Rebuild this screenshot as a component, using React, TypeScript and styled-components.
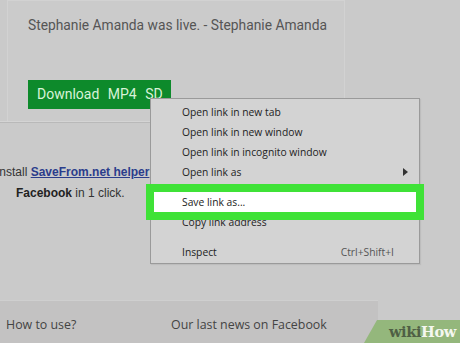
import { createGlobalStyle } from "styled-components";
import styled from "styled-components";

const Global = createGlobalStyle`
  html, body {
    margin: 0;
    padding: 0;
    background: #cacaca;
  }
  #root {
    width: 460px;
    height: 343px;
    overflow: hidden;
  }
`;

const Page = styled.div`
  position: relative;
  width: 460px;
  height: 343px;
  display: flex;
  flex-direction: column;
  background: #cacaca;
`;

const Card = styled.div`
  margin-left: 7px;
  width: 338px;
  height: 122px;
  box-sizing: border-box;
  border-left: 1px solid #d2d2d2;
  border-right: 1px solid #d2d2d2;
  border-top: 1px solid #d2d2d2;
  background: #cbcbcb;
  padding: 14px 0 0 20px;
  display: flex;
  flex-direction: column;
`;

const Title = styled.div`
  font-family: Roboto, "Noto Sans", sans-serif;
  font-size: 13.8px;
  color: #555;
  line-height: 20px;
`;

const DownloadButton = styled.div`
  margin-top: 45px;
  align-self: flex-start;
  height: 29px;
  width: 143px;
  box-sizing: border-box;
  padding-left: 9px;
  background: #0d8a2b;
  color: #d8f2d8;
  font-family: Roboto, "Noto Sans", sans-serif;
  font-size: 14px;
  word-spacing: 5px;
  line-height: 29px;
`;

const Helper = styled.div`
  width: 345px;
  border-top: 1px solid #b9b9b9;
  box-shadow: 0 -1px 0 #d4d4d4;
  padding-top: 39px;
  height: 178px;
  box-sizing: border-box;
  font-family: "Liberation Sans", Arial, sans-serif;
  font-size: 12px;
  color: #333;
  overflow: hidden;
`;

const HelperLine = styled.div<{ indent: number }>`
  margin-left: ${({ indent }) => indent}px;
  line-height: 21px;
  white-space: nowrap;
`;

const HelperLink = styled.span`
  color: #2b3d8c;
  text-decoration: underline;
  font-weight: bold;
`;

const Strong = styled.b`
  color: #222;
`;

const Footer = styled.div`
  width: 378px;
  flex: 1;
  background: #c3c2c2;
  border-top: 1px solid #cfcfcf;
  display: flex;
  align-items: center;
  font-family: "Open Sans", "Noto Sans", sans-serif;
  font-size: 12.4px;
  color: #444;
  padding-top: 4px;
  box-sizing: border-box;
`;

const FooterLink = styled.span<{ width: number }>`
  width: ${({ width }) => width}px;
  padding-left: 6px;
  box-sizing: border-box;
`;

const Menu = styled.div`
  position: absolute;
  left: 150px;
  top: 98px;
  width: 270px;
  height: 166px;
  box-sizing: border-box;
  background: #d3d3d3;
  border: 1px solid #9a9a9a;
  box-shadow: 1px 1px 1px #bdbdbd;
  padding-top: 3px;
  font-family: "Open Sans", "Noto Sans", sans-serif;
  font-size: 10.3px;
  color: #222;
`;

const Item = styled.div<{ active?: boolean }>`
  position: relative;
  height: 20px;
  line-height: 20px;
  padding-left: 28px;
  padding-right: 22px;
  margin: 0 3px;
  display: flex;
  justify-content: space-between;
  background: ${({ active }) => (active ? "#ffffff" : "transparent")};
  outline: ${({ active }) => (active ? "8px solid #3fe237" : "none")};
  z-index: ${({ active }) => (active ? 1 : 0)};
`;

const Gap = styled.div<{ h: number }>`
  height: ${({ h }) => h}px;
`;

const Shortcut = styled.span`
  color: #555;
`;

const Arrow = styled.span`
  width: 0;
  height: 0;
  margin-top: 6px;
  margin-right: -14px;
  border-left: 5px solid #333;
  border-top: 4px solid transparent;
  border-bottom: 4px solid transparent;
`;

const Logo = styled.div`
  position: absolute;
  right: 0;
  bottom: 0;
  width: 96px;
  height: 23px;
  background: #94b77c;
  clip-path: polygon(13px 0, 100% 0, 100% 100%, 0 100%);
  display: flex;
  align-items: center;
  justify-content: flex-end;
  padding-right: 4px;
  box-sizing: border-box;
  font-family: "DejaVu Serif", "Liberation Serif", serif;
  font-weight: bold;
  font-size: 14.6px;
  letter-spacing: -0.4px;
`;

const Wiki = styled.span`
  color: #4f5f45;
`;

const How = styled.span`
  color: #f4f7f0;
`;

export default function App() {
  return (
    <Page>
      <Global />
      <Card>
        <Title>Stephanie Amanda was live. - Stephanie Amanda</Title>
        <DownloadButton>Download MP4 SD</DownloadButton>
      </Card>
      <Helper>
        <HelperLine indent={-4}>
          Install <HelperLink>SaveFrom.net helper</HelperLink> or
        </HelperLine>
        <HelperLine indent={16}>
          <Strong>Facebook</Strong> in 1 click.
        </HelperLine>
      </Helper>
      <Footer>
        <FooterLink width={165}>How to use?</FooterLink>
        <FooterLink width={200}>Our last news on Facebook</FooterLink>
      </Footer>

      <Menu>
        <Item>Open link in new tab</Item>
        <Item>Open link in new window</Item>
        <Item>Open link in incognito window</Item>
        <Item>
          Open link as
          <Arrow />
        </Item>
        <Gap h={10} />
        <Item active>Save link as...</Item>
        <Item>Copy link address</Item>
        <Gap h={10} />
        <Item>
          Inspect
          <Shortcut>Ctrl+Shift+I</Shortcut>
        </Item>
      </Menu>

      <Logo>
        <Wiki>wiki</Wiki>
        <How>How</How>
      </Logo>
    </Page>
  );
}
